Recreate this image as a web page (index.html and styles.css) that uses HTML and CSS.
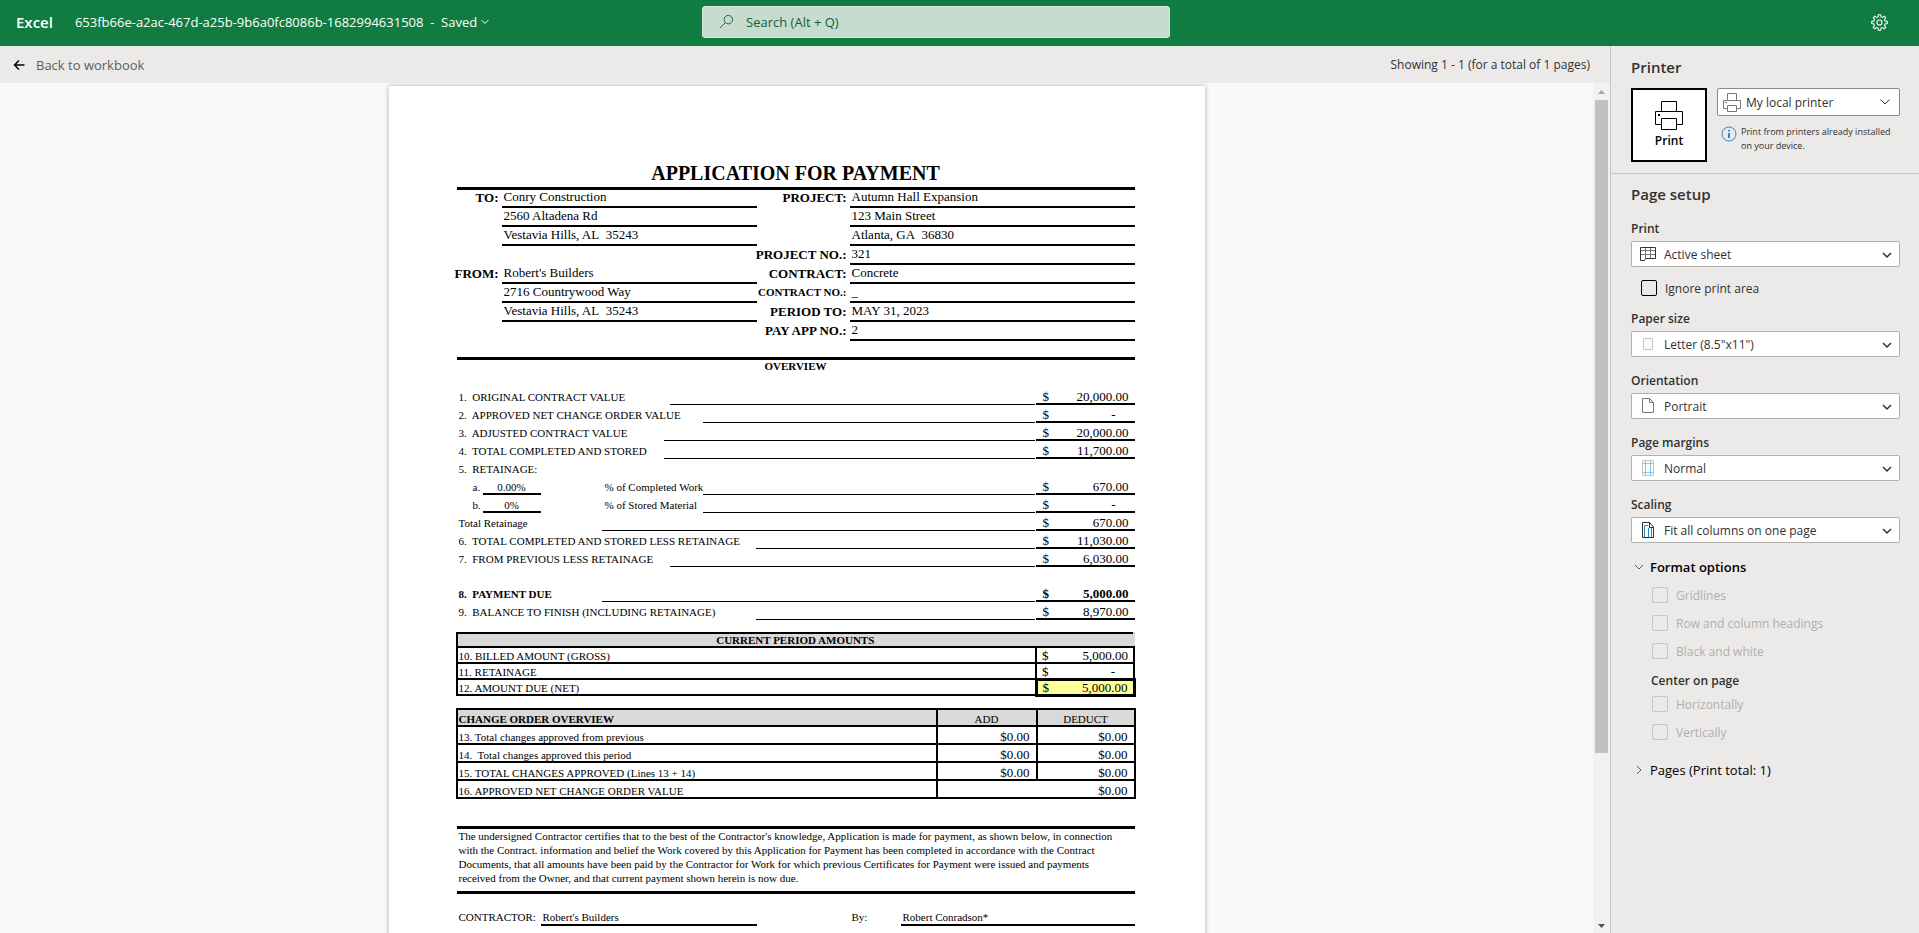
FILE: index.html
```html
<!DOCTYPE html>
<html lang="en">
<head>
<meta charset="utf-8">
<title>Print preview</title>
<link rel="stylesheet" href="styles.css">
</head>
<body>
<div class="app">
  <header class="topbar">
    <div class="topbar-left">
      <strong class="brand">Excel</strong>
      <button class="doc-name" type="button">653fb66e-a2ac-467d-a25b-9b6a0fc8086b-1682994631508 &nbsp;- &nbsp;Saved
        <svg class="tiny-chev" viewBox="0 0 8 8"><path d="M0.500 2 L4 5.500 L7.500 2"/></svg>
      </button>
    </div>
    <div class="search">
      <svg class="search-icon" viewBox="0 0 16 16"><circle cx="10" cy="6" r="4.500"/><path d="M6.800 9.200 L1 15"/></svg>
      <input class="search-input" type="text" placeholder="Search (Alt + Q)" aria-label="Search">
    </div>
    <div class="topbar-right">
      <button class="gear" type="button" aria-label="Settings">
        <svg viewBox="0 0 16 16"><circle cx="8" cy="8" r="2.400"/><path d="M6.600 2.700 L7 0.700 H9 L9.400 2.700 L10.800 3.300 L12.500 2.100 L13.900 3.500 L12.700 5.200 L13.300 6.600 L15.300 7 V9 L13.300 9.400 L12.700 10.800 L13.900 12.500 L12.500 13.900 L10.800 12.700 L9.400 13.300 L9 15.300 H7 L6.600 13.300 L5.200 12.700 L3.500 13.900 L2.100 12.500 L3.300 10.800 L2.700 9.400 L0.700 9 V7 L2.700 6.600 L3.300 5.200 L2.100 3.500 L3.500 2.100 L5.200 3.300 Z"/></svg>
      </button>
    </div>
  </header>

  <div class="body">
    <main class="preview">
      <div class="subbar">
        <button class="back" type="button">
          <svg viewBox="0 0 12 12"><path d="M11.500 6 H1.500 M6 1.500 L1.500 6 L6 10.500"/></svg>
          <span>Back to workbook</span>
        </button>
        <span class="showing">Showing 1 - 1 (for a total of 1 pages)</span>
      </div>
      <div class="stage">
        <div class="canvas">
          <article class="sheet">
            <h1 class="sheet-title">APPLICATION FOR PAYMENT</h1>
            <section class="parties">
              <span class="tag">TO:</span><span class="val">Conry Construction</span><span class="tag">PROJECT:</span><span class="val">Autumn Hall Expansion</span>
              <span></span><span class="val">2560 Altadena Rd</span><span></span><span class="val">123 Main Street</span>
              <span></span><span class="val">Vestavia Hills, AL&nbsp; 35243</span><span></span><span class="val">Atlanta, GA&nbsp; 36830</span>
              <span></span><span></span><span class="tag">PROJECT NO.:</span><span class="val">321</span>
              <span class="tag">FROM:</span><span class="val">Robert's Builders</span><span class="tag">CONTRACT:</span><span class="val">Concrete</span>
              <span></span><span class="val">2716 Countrywood Way</span><span class="tag tag-small">CONTRACT NO.:</span><span class="val">_</span>
              <span></span><span class="val">Vestavia Hills, AL&nbsp; 35243</span><span class="tag">PERIOD TO:</span><span class="val">MAY 31, 2023</span>
              <span></span><span></span><span class="tag">PAY APP NO.:</span><span class="val">2</span>
            </section>

            <h2 class="overview-title">OVERVIEW</h2>
            <section class="overview">
              <div class="row"><span class="lab w213">1.&nbsp; ORIGINAL CONTRACT VALUE</span><span class="rule"></span><span class="amt"><span>$</span><span>20,000.00</span></span></div>
              <div class="row"><span class="lab w246">2.&nbsp; APPROVED NET CHANGE ORDER VALUE</span><span class="rule"></span><span class="amt"><span>$</span><span class="dash">-</span></span></div>
              <div class="row"><span class="lab w207">3.&nbsp; ADJUSTED CONTRACT VALUE</span><span class="rule"></span><span class="amt"><span>$</span><span>20,000.00</span></span></div>
              <div class="row"><span class="lab w207">4.&nbsp; TOTAL COMPLETED AND STORED</span><span class="rule"></span><span class="amt"><span>$</span><span>11,700.00</span></span></div>
              <div class="row"><span class="lab">5.&nbsp; RETAINAGE:</span></div>
              <div class="row"><span class="lab sub w246"><span class="letter">a.</span><span class="pct">0.00%</span><span class="of">% of Completed Work</span></span><span class="rule"></span><span class="amt"><span>$</span><span>670.00</span></span></div>
              <div class="row"><span class="lab sub w246"><span class="letter">b.</span><span class="pct">0%</span><span class="of">% of Stored Material</span></span><span class="rule"></span><span class="amt"><span>$</span><span class="dash">-</span></span></div>
              <div class="row"><span class="lab w145">Total Retainage</span><span class="rule"></span><span class="amt"><span>$</span><span>670.00</span></span></div>
              <div class="row"><span class="lab w299">6.&nbsp; TOTAL COMPLETED AND STORED LESS RETAINAGE</span><span class="rule"></span><span class="amt"><span>$</span><span>11,030.00</span></span></div>
              <div class="row"><span class="lab w213">7.&nbsp; FROM PREVIOUS LESS RETAINAGE</span><span class="rule"></span><span class="amt"><span>$</span><span>6,030.00</span></span></div>
              <div class="row row-blank"></div>
              <div class="row row-due"><span class="lab w145">8.&nbsp; PAYMENT DUE</span><span class="rule"></span><span class="amt"><span>$</span><span>5,000.00</span></span></div>
              <div class="row"><span class="lab w299">9.&nbsp; BALANCE TO FINISH (INCLUDING RETAINAGE)</span><span class="rule"></span><span class="amt"><span>$</span><span>8,970.00</span></span></div>
            </section>

            <table class="grid current">
              <colgroup><col><col class="col-amt"></colgroup>
              <thead><tr><th colspan="2">CURRENT PERIOD AMOUNTS</th></tr></thead>
              <tbody>
                <tr><td>10. BILLED AMOUNT (GROSS)</td><td><div class="money"><span>$</span><span>5,000.00</span></div></td></tr>
                <tr><td>11. RETAINAGE</td><td><div class="money"><span>$</span><span class="dash">-</span></div></td></tr>
                <tr><td>12. AMOUNT DUE (NET)</td><td class="net"><div class="money"><span>$</span><span>5,000.00</span></div></td></tr>
              </tbody>
            </table>

            <table class="grid changes">
              <colgroup><col><col class="col-add"><col class="col-amt"></colgroup>
              <thead><tr><th class="first">CHANGE ORDER OVERVIEW</th><th>ADD</th><th>DEDUCT</th></tr></thead>
              <tbody>
                <tr><td>13. Total changes approved from previous</td><td class="num">$0.00</td><td class="num">$0.00</td></tr>
                <tr><td>14.&nbsp; Total changes approved this period</td><td class="num">$0.00</td><td class="num">$0.00</td></tr>
                <tr><td>15. TOTAL CHANGES APPROVED (Lines 13 + 14)</td><td class="num">$0.00</td><td class="num">$0.00</td></tr>
                <tr><td>16. APPROVED NET CHANGE ORDER VALUE</td><td class="num" colspan="2">$0.00</td></tr>
              </tbody>
            </table>

            <p class="certify">The undersigned Contractor certifies that to the best of the Contractor's knowledge, Application is made for payment, as shown below, in connection<br>with the Contract. information and belief the Work covered by this Application for Payment has been completed in accordance with the Contract<br>Documents, that all amounts have been paid by the Contractor for Work for which previous Certificates for Payment were issued and payments<br>received from the Owner, and that current payment shown herein is now due.</p>

            <div class="sign">
              <span class="sign-tag">CONTRACTOR:</span><span class="sign-val">Robert's Builders</span>
              <span class="sign-by">By:</span><span class="sign-val">Robert Conradson*</span>
            </div>
          </article>
        </div>
        <div class="scrollbar" aria-hidden="true">
          <svg class="sb-arrow" viewBox="0 0 17 17"><path fill="#a3a3a3" d="M5 11 L8.500 7 L12 11 Z"/></svg>
          <div class="sb-track"><div class="sb-thumb"></div></div>
          <svg class="sb-arrow" viewBox="0 0 17 17"><path fill="#505050" d="M5 8 H12 L8.500 12 Z"/></svg>
        </div>
      </div>
    </main>

    <aside class="panel">
      <section class="printer">
        <h2 class="panel-title">Printer</h2>
        <div class="printer-row">
          <button class="print-btn" type="button">
            <svg viewBox="0 0 30 30"><path d="M7.500 11.500 V1.500 H22.500 V11.500 M7.500 24.500 H1.500 V11.500 H28.500 V24.500 H22.500 M7.500 18.500 H22.500 V29.500 H7.500 Z"/><rect class="dot" x="4" y="14" width="2" height="2"/></svg>
            <span>Print</span>
          </button>
          <div class="printer-side">
            <div class="select-wrap select-printer">
              <svg class="lead" viewBox="0 0 20 20"><path class="k" d="M5.500 7.500 V0.500 H14.500 V7.500 M5.500 15.500 H1.500 V7.500 H18.500 V15.500 H14.500 M5.500 12.500 H14.500 V18.500 H5.500 Z M3 9.500 H5"/></svg>
              <select class="select" aria-label="Printer"><option>My local printer</option></select>
              <svg class="chev thin" viewBox="0 0 12 12"><path d="M1.500 3.500 L6 8 L10.500 3.500"/></svg>
            </div>
            <div class="info">
              <svg viewBox="0 0 16 16"><circle cx="8" cy="8" r="7"/><path class="i" d="M8 7 V12 M8 4 V5.500"/></svg>
              <p>Print from printers already installed on your device.</p>
            </div>
          </div>
        </div>
      </section>

      <section class="setup">
        <h2 class="panel-title">Page setup</h2>

        <div class="field">
          <label for="f-print">Print</label>
          <div class="select-wrap">
            <svg class="lead" viewBox="0 0 18 18"><path class="k" d="M1.500 5.500 H16.500 M1.500 9.500 H16.500 M6.500 2.500 V13 M11.500 2.500 V13"/><path class="d" d="M1.500 2.500 H16.500 V13.500 H6.500 L5.500 15.500 H1.500 Z"/></svg>
            <select class="select" id="f-print"><option>Active sheet</option></select>
            <svg class="chev" viewBox="0 0 12 12"><path d="M2 4 L6 8 L10 4"/></svg>
          </div>
        </div>
        <label class="check check-ignore"><input type="checkbox"><span>Ignore print area</span></label>

        <div class="field">
          <label for="f-paper">Paper size</label>
          <div class="select-wrap">
            <svg class="lead" viewBox="0 0 18 18"><path class="l" d="M4.500 3.500 H13.500 V14.500 H4.500 Z"/></svg>
            <select class="select" id="f-paper"><option>Letter (8.5"x11")</option></select>
            <svg class="chev" viewBox="0 0 12 12"><path d="M2 4 L6 8 L10 4"/></svg>
          </div>
        </div>
        <div class="field">
          <label for="f-orient">Orientation</label>
          <div class="select-wrap">
            <svg class="lead" viewBox="0 0 18 18"><path class="k" d="M3.500 1.500 H10.500 L14.500 5.500 V15.500 H3.500 Z M10.500 1.500 V5.500 H14.500"/></svg>
            <select class="select" id="f-orient"><option>Portrait</option></select>
            <svg class="chev" viewBox="0 0 12 12"><path d="M2 4 L6 8 L10 4"/></svg>
          </div>
        </div>
        <div class="field">
          <label for="f-margins">Page margins</label>
          <div class="select-wrap">
            <svg class="lead" viewBox="0 0 18 18"><path class="l" d="M3.500 1.500 H14.500 V16.500 H3.500 Z"/><path class="b" d="M6.500 2 V16 M11.500 2 V16 M4 4.500 H14 M4 13.500 H14"/></svg>
            <select class="select" id="f-margins"><option>Normal</option></select>
            <svg class="chev" viewBox="0 0 12 12"><path d="M2 4 L6 8 L10 4"/></svg>
          </div>
        </div>
        <div class="field">
          <label for="f-scale">Scaling</label>
          <div class="select-wrap">
            <svg class="lead" viewBox="0 0 18 18"><path class="bb" d="M5.500 16 V4.500 H9 M9.500 7 V16 M12.500 7 V16"/><path class="d" d="M3.500 1.500 H10.500 L14.500 6 V16.500 H3.500 Z M10.500 1.500 V6.500 H14.500"/></svg>
            <select class="select" id="f-scale"><option>Fit all columns on one page</option></select>
            <svg class="chev" viewBox="0 0 12 12"><path d="M2 4 L6 8 L10 4"/></svg>
          </div>
        </div>

        <button class="toggle toggle-open" type="button">
          <svg viewBox="0 0 10 10"><path d="M1 3 L5 7 L9 3"/></svg><span>Format options</span>
        </button>
        <div class="options">
          <label class="check"><input type="checkbox" disabled><span>Gridlines</span></label>
          <label class="check"><input type="checkbox" disabled><span>Row and column headings</span></label>
          <label class="check"><input type="checkbox" disabled><span>Black and white</span></label>
        </div>
        <h3 class="center-title">Center on page</h3>
        <div class="options">
          <label class="check"><input type="checkbox" disabled><span>Horizontally</span></label>
          <label class="check"><input type="checkbox" disabled><span>Vertically</span></label>
        </div>
        <button class="toggle toggle-pages" type="button">
          <svg viewBox="0 0 10 10"><path d="M3 1 L7 5 L3 9"/></svg><span>Pages (Print total: 1)</span>
        </button>
      </section>
    </aside>
  </div>
</div>
</body>
</html>
```

FILE: styles.css
```css
* { box-sizing: border-box; }
body { margin: 0; font-family: "Open Sans", "Noto Sans", sans-serif; font-size: 12px; color: #323130; }
h1, h2, h3, p { margin: 0; }
button, input, select { font: inherit; color: inherit; }
button { border: 0; padding: 0; background: none; }
svg { fill: none; stroke: currentColor; stroke-width: 1; flex: none; }

.app { height: 100vh; display: flex; flex-direction: column; overflow: hidden; background: #faf9f8; }

.topbar { height: 46px; flex: none; background: #107c41; color: #fff; display: grid; grid-template-columns: 15fr 10fr 16fr; align-items: center; }
.topbar-left { display: flex; align-items: center; gap: 22px; padding-left: 16px; padding-bottom: 2px; }
.brand { font-size: 15px; font-weight: 600; line-height: 20px; }
.doc-name { display: flex; align-items: center; gap: 4px; font-size: 13px; white-space: nowrap; }
.tiny-chev { width: 8px; height: 8px; }
.search { position: relative; padding-bottom: 2px; }
.search-input { display: block; width: 100%; height: 32px; padding: 0 43px; font-size: 13px; color: #0b5c30; border: 1px solid #d9e8de; border-radius: 3px; background: #c5dccf; outline: 0; }
.search-input::placeholder { color: #185c37; opacity: 1; }
.search-icon { position: absolute; left: 17px; top: 8px; width: 15px; height: 15px; color: #185c37; }
.topbar-right { display: flex; justify-content: flex-end; padding-right: 31px; padding-bottom: 2px; }
.gear svg { display: block; width: 17px; height: 17px; }

.body { flex: 1; min-height: 0; display: flex; }
.preview { flex: 1; min-width: 0; display: flex; flex-direction: column; }
.subbar { height: 37px; flex: none; background: #ebeae9; display: flex; align-items: center; justify-content: space-between; padding: 0 20px 0 13px; }
.back { display: flex; align-items: center; gap: 11px; font-size: 13px; color: #605e5c; }
.back svg { width: 12px; height: 12px; stroke: #000; stroke-width: 1.5; }
.showing { font-size: 12px; }
.stage { flex: 1; min-height: 0; display: flex; }
.canvas { flex: 1; overflow: hidden; padding-top: 3px; }
.scrollbar { width: 17px; flex: none; background: #f1f1f1; display: flex; flex-direction: column; }
.sb-arrow { width: 17px; height: 17px; stroke: none; display: block; }
.sb-track { flex: 1; padding: 0 2px; }
.sb-thumb { height: 80%; background: #c1c1c1; }

.sheet { width: 816px; min-height: 1056px; margin: 0 auto; padding: 74px 70px 60px 68px; background: #fff; box-shadow: 0 0 5px rgba(0, 0, 0, .3); color: #000; font-family: "Liberation Serif", "Times New Roman", serif; font-size: 11px; line-height: 14px; }
.sheet-title { font-size: 20px; line-height: 27px; font-weight: 700; text-align: center; border-bottom: 3px solid #000; }
.parties { display: grid; grid-template-columns: minmax(0, 45fr) minmax(0, 255fr) minmax(0, 93fr) minmax(0, 285fr); grid-auto-rows: 19px; font-size: 13px; line-height: 15px; padding-bottom: 16px; margin-top: -1px; border-bottom: 3px solid #000; }
.parties .tag { display: flex; justify-content: flex-end; font-weight: 700; padding: 1px 3px 0 0; white-space: nowrap; }
.parties .tag-small { font-size: 11px; }
.parties .val { padding-left: 2px; border-bottom: 2px solid #000; white-space: nowrap; }
.overview-title { font-size: 11px; line-height: 12px; font-weight: 700; text-align: center; margin-bottom: 15px; }
.row { height: 18px; display: flex; line-height: 16px; white-space: nowrap; }
.row-blank { height: 17px; }
.row-due { font-weight: 700; }
.lab { padding: 2px 0 0 2px; }
.w145 { width: 145px; }
.w207 { width: 207px; }
.w213 { width: 213px; }
.w246 { width: 246px; }
.w299 { width: 299px; }
.rule { flex: 1; border-bottom: 1px solid #000; margin-right: 1px; }
.amt { width: 99px; display: flex; justify-content: space-between; padding: 2px 6px 0 7px; border-bottom: 2px solid #000; font-size: 13px; line-height: 15px; }
.dash { padding-right: 13px; }
.lab.sub { display: flex; padding: 0 0 0 16px; }
.letter { width: 10px; flex: none; padding-top: 2px; }
.pct { width: 58px; flex: none; text-align: center; border-bottom: 2px solid #000; padding-top: 2px; }
.of { padding: 2px 0 0 64px; }

.grid { border-collapse: collapse; table-layout: fixed; width: calc(100% + 2px); margin: 12px -1px 0; }
.grid th, .grid td { border: 2px solid #000; padding: 0 1px; line-height: 12px; vertical-align: bottom; text-align: left; font-weight: 400; }
.grid th { background: #d9d9d9; text-align: center; }
.col-amt { width: 98px; }
.col-add { width: 100px; }
.current th { font-weight: 700; border-right-color: #d9d9d9; }
.current td { height: 16px; }
.grid td.net { background: #ff9; border: 3px solid #000; }
.money { display: flex; justify-content: space-between; padding: 0 4px; font-size: 13px; }
.changes { margin-top: 11px; }
.changes th { height: 17px; }
.changes td { height: 18px; }
.grid th.first { text-align: left; font-weight: 700; }
.grid td.num { text-align: right; padding-right: 6px; font-size: 13px; }

.certify { margin-top: 27px; padding: 0 0 6px 2px; border-top: 3px solid #000; border-bottom: 3px solid #000; white-space: nowrap; }
.sign { display: grid; grid-template-columns: minmax(0, 84fr) minmax(0, 216fr) minmax(0, 144fr) minmax(0, 234fr); margin-top: 16px; }
.sign-tag { padding-left: 2px; }
.sign-by { padding-left: 95px; }
.sign-val { border-bottom: 2px solid #000; padding-left: 2px; }

.panel { width: 309px; flex: none; background: #ebeae9; border-left: 1px solid #c8c6c4; }
.panel-title { font-size: 15px; line-height: 20px; font-weight: 600; }
.printer { padding: 11px 19px 11px 20px; border-bottom: 1px solid #c8c6c4; }
.printer-row { display: flex; gap: 10px; margin-top: 11px; }
.print-btn { width: 76px; height: 74px; border: 2px solid #000; background: #fff; display: flex; flex-direction: column; align-items: center; justify-content: center; gap: 2px; padding-bottom: 1px; font-weight: 600; color: #000; }
.print-btn svg { width: 30px; height: 30px; }
.print-btn .dot { fill: #000; stroke: none; }
.printer-side { flex: 1; min-width: 0; }
.info { display: flex; gap: 4px; margin-top: 9px; padding-left: 4px; }
.info svg { width: 16px; height: 16px; margin-top: 1px; color: #2b88d8; }
.info .i { stroke-width: 2; }
.info p { font-size: 9px; line-height: 14px; }

.setup { padding: 10px 19px 0 20px; }
.field { margin-top: 16px; }
.setup .panel-title + .field { margin-top: 17px; }
.field label { display: block; font-weight: 600; line-height: 16px; margin-bottom: 4px; }
.select-wrap { position: relative; }
.select { appearance: none; display: block; width: 100%; height: 26px; padding: 0 28px 0 32px; border: 1px solid #b3b0ad; border-radius: 2px; background: #fff; font-size: 12px; }
.select-printer .select { height: 28px; border-color: #8a8886; padding-left: 28px; }
.lead { position: absolute; left: 8px; top: 4px; width: 18px; height: 18px; }
.select-printer .lead { left: 5px; top: 5px; width: 20px; height: 20px; }
.lead .k { stroke: #797775; }
.lead .d { stroke: #323130; }
.lead .l { stroke: #c8c6c4; fill: #fafafa; }
.lead .b { stroke: #83c4ea; }
.lead .bb { stroke: #1e8bcd; }
.chev { position: absolute; right: 7px; top: 8px; width: 12px; height: 12px; stroke-width: 1.5; }
.select-printer .chev { right: 9px; }
.chev.thin { stroke-width: 1; }
.check { display: flex; align-items: center; gap: 8px; height: 16px; }
.check input { appearance: none; width: 16px; height: 16px; margin: 0; border: 1px solid #000; border-radius: 2px; background: transparent; }
.check input:disabled { border-color: #c8c6c4; }
.check input:disabled + span { color: #b1afad; }
.check-ignore { margin: 13px 0 0 10px; }
.check-ignore + .field { margin-top: 15px; }
.toggle { display: flex; align-items: center; gap: 6px; margin: 14px 0 0 3px; line-height: 20px; font-size: 13px; color: #000; }
.toggle svg { width: 10px; height: 10px; color: #605e5c; }
.toggle-open { font-weight: 600; }
.toggle-pages { margin-top: 20px; }
.options { display: grid; gap: 12px; margin: 10px 0 0 21px; }
.center-title { font-size: 12px; line-height: 16px; font-weight: 600; margin: 14px 0 0 20px; }
.center-title + .options { margin-top: 7px; }
```
